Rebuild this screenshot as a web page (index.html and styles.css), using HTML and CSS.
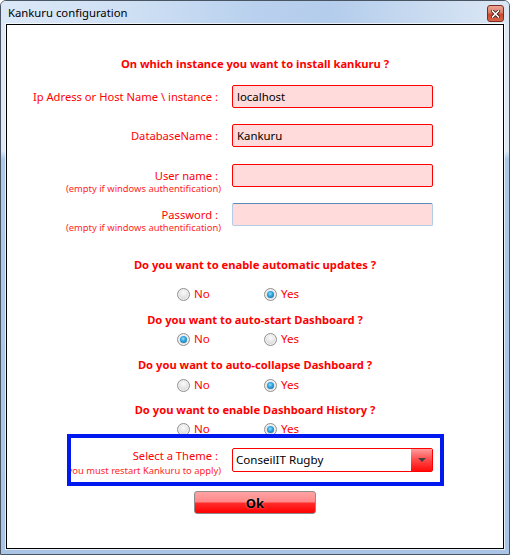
FILE: index.html
```html
<!DOCTYPE html>
<html>
<head>
<meta charset="utf-8">
<link rel="stylesheet" href="styles.css">
</head>
<body>
<div class="window">
  <div class="titlebar">
    <span class="title">Kankuru configuration</span>
    <span class="close">
      <svg width="9" height="8" viewBox="0 0 9 8"><path d="M1.5 1 L7.5 7 M7.5 1 L1.5 7" stroke="#3a1a14" stroke-width="3.2" stroke-linecap="square"/><path d="M1.5 1 L7.5 7 M7.5 1 L1.5 7" stroke="#fff" stroke-width="1.6" stroke-linecap="square"/></svg>
    </span>
  </div>
  <div class="client">
    <div class="heading">On which instance you want to install kankuru ?</div>
    <div class="form">
      <div class="row">
        <div class="label"><span class="main">Ip Adress or Host Name \ instance :</span></div>
        <div class="input">localhost</div>
      </div>
      <div class="row">
        <div class="label"><span class="main">DatabaseName :</span></div>
        <div class="input">Kankuru</div>
      </div>
      <div class="row row-gap">
        <div class="label"><span class="main">User name :</span><span class="sub">(empty if windows authentification)</span></div>
        <div class="input"></div>
      </div>
      <div class="row">
        <div class="label"><span class="main">Password :</span><span class="sub">(empty if windows authentification)</span></div>
        <div class="input focus"></div>
      </div>
    </div>

    <div class="question q1">Do you want to enable automatic updates ?</div>
    <div class="radios r1">
      <span class="opt"><span class="radio"></span>No</span>
      <span class="opt"><span class="radio on"></span>Yes</span>
    </div>

    <div class="question q2">Do you want to auto-start Dashboard ?</div>
    <div class="radios r2">
      <span class="opt"><span class="radio on"></span>No</span>
      <span class="opt"><span class="radio"></span>Yes</span>
    </div>

    <div class="question q3">Do you want to auto-collapse Dashboard ?</div>
    <div class="radios r3">
      <span class="opt"><span class="radio"></span>No</span>
      <span class="opt"><span class="radio on"></span>Yes</span>
    </div>

    <div class="question q4">Do you want to enable Dashboard History ?</div>
    <div class="radios r4">
      <span class="opt"><span class="radio"></span>No</span>
      <span class="opt"><span class="radio on"></span>Yes</span>
    </div>

    <div class="theme-box">
      <div class="row theme">
        <div class="label"><span class="main">Select a Theme :</span><span class="sub">(you must restart Kankuru to apply)</span></div>
        <div class="select"><span class="value">ConseilIT Rugby</span><span class="btn"><span class="tri"></span></span></div>
      </div>
    </div>

    <div class="ok-row"><button class="ok">Ok</button></div>
  </div>
</div>
</body>
</html>
```
FILE: styles.css
```css
* { box-sizing: border-box; }
html, body { margin: 0; padding: 0; }
body {
  width: 510px;
  height: 555px;
  overflow: hidden;
  background: #fff;
  font-family: "Noto Sans", "Open Sans", sans-serif;
  font-size: 11.2px;
}
.window {
  width: 510px;
  height: 555px;
  border: 1px solid #4a5564;
  border-radius: 6px 6px 0 0;
  background: linear-gradient(180deg, #dfe9f6 0, #dfe9f6 150px, #aec8e8 158px, #a9c4e5 100%);
  display: flex;
  flex-direction: column;
}
.titlebar {
  height: 23px;
  flex: none;
  display: flex;
  justify-content: space-between;
  align-items: flex-start;
  padding: 0 5px 0 7px;
  border-radius: 5px 5px 0 0;
  background: linear-gradient(90deg, #dbe8f7 0%, #cfe0f4 25%, #b9d1ee 50%, #b4cdec 65%, #cbdcf1 85%, #dbe7f5 100%);
}
.title {
  margin-top: 4px;
  line-height: 16px;
  font-size: 11.3px;
  color: #000;
}
.close {
  width: 17px;
  height: 17px;
  margin-top: 4px;
  border: 1px solid #7d2a1f;
  border-radius: 3px;
  background: linear-gradient(180deg, #eba594 0%, #dc7a64 45%, #c9472f 55%, #d66448 100%);
  display: flex;
  align-items: center;
  justify-content: center;
}
.client {
  flex: 1;
  margin: 0 5px 5px 5px;
  border: 1px solid #000;
  background: #fff;
  box-shadow: 0 0 0 1px rgba(255,255,255,0.7);
}
.heading {
  margin-top: 31px;
  text-align: center;
  font-weight: 700;
  line-height: 16px;
  color: #f00;
}
.form {
  display: flex;
  flex-direction: column;
  gap: 16px;
  margin-top: 13px;
}
.row {
  display: grid;
  grid-template-columns: 212px 201px;
  column-gap: 13px;
}
.row-gap { margin-top: 1px; }
.label {
  height: 23px;
  display: flex;
  flex-direction: column;
  align-items: flex-end;
  padding-top: 4px;
  color: #f00;
  white-space: nowrap;
}
.main {
  line-height: 15px;
  padding-right: 1px;
}
.sub {
  font-size: 9.4px;
  line-height: 11px;
  margin-right: -2px;
  color: #ff2626;
}
.input {
  height: 23px;
  border: 1px solid #f00;
  border-radius: 2px;
  background: #ffdbdb;
  padding: 0 4px;
  line-height: 21px;
  font-size: 11.4px;
  color: #000;
}
.input.focus {
  border-color: #b3cce6;
  border-top-color: #5d89bb;
}
.question {
  text-align: center;
  font-weight: 700;
  line-height: 16px;
  color: #f00;
}
.q1 { margin-top: 31px; }
.q2 { margin-top: 10px; }
.q3 { margin-top: 10px; }
.q4 { margin-top: 9px; }
.radios {
  display: grid;
  grid-template-columns: 87px auto;
  padding-left: 170px;
  height: 16px;
}
.r1 { margin-top: 13px; }
.r2 { margin-top: 3px; }
.r3 { margin-top: 4px; }
.r4 { margin-top: 3px; }
.opt {
  display: flex;
  align-items: center;
  gap: 4px;
  line-height: 16px;
  font-size: 11.6px;
  color: #f00;
}
.radio {
  width: 13px;
  height: 13px;
  flex: none;
  border-radius: 50%;
  border: 1px solid #8e8f8f;
  background: radial-gradient(circle at 50% 35%, #fbfbfb 0, #e6e6e6 45%, #cfcfcf 100%);
  box-shadow: inset 0 0 0 1px #f2f2f2;
}
.radio.on::after {
  content: "";
  display: block;
  width: 7px;
  height: 7px;
  margin: 2px;
  border-radius: 50%;
  background: radial-gradient(circle at 45% 40%, #8ee2ff 0, #2c9fdc 45%, #135b93 100%);
}
.theme-box {
  position: relative;
  width: 377px;
  height: 52px;
  margin: -3px 0 0 60px;
  border: 4px solid #0019ef;
  padding-top: 10px;
  overflow: hidden;
}
.row.theme {
  grid-template-columns: 148px 201px;
}
.theme .label {
  padding-top: 0;
  margin-top: 0;
}
.theme .sub {
  margin-top: 2px;
}
.select {
  height: 24px;
  border: 1px solid #f00;
  border-radius: 2px;
  background: #fff;
  display: flex;
}
.value {
  flex: 1;
  padding-left: 3px;
  line-height: 22px;
  font-size: 11.6px;
  color: #000;
}
.btn {
  width: 21px;
  background: linear-gradient(180deg, #ff9c9c 0%, #ff5050 45%, #ff0a0a 100%);
  display: flex;
  align-items: center;
  justify-content: center;
}
.tri {
  width: 0;
  height: 0;
  border-left: 4px solid transparent;
  border-right: 4px solid transparent;
  border-top: 4px solid #404040;
}
.ok-row {
  display: flex;
  justify-content: center;
  margin-top: 5px;
}
.ok {
  width: 122px;
  height: 23px;
  padding: 0;
  border: 1px solid #8d8d8d;
  border-radius: 3px;
  background: linear-gradient(180deg, #ffa3a3 0%, #ff8a8a 45%, #ff2a2a 55%, #ff0000 100%);
  font-family: "Noto Sans", sans-serif;
  font-size: 13px;
  font-weight: 700;
  color: #000;
  text-shadow: 0 0 2px rgba(255,255,255,0.6);
}
```
